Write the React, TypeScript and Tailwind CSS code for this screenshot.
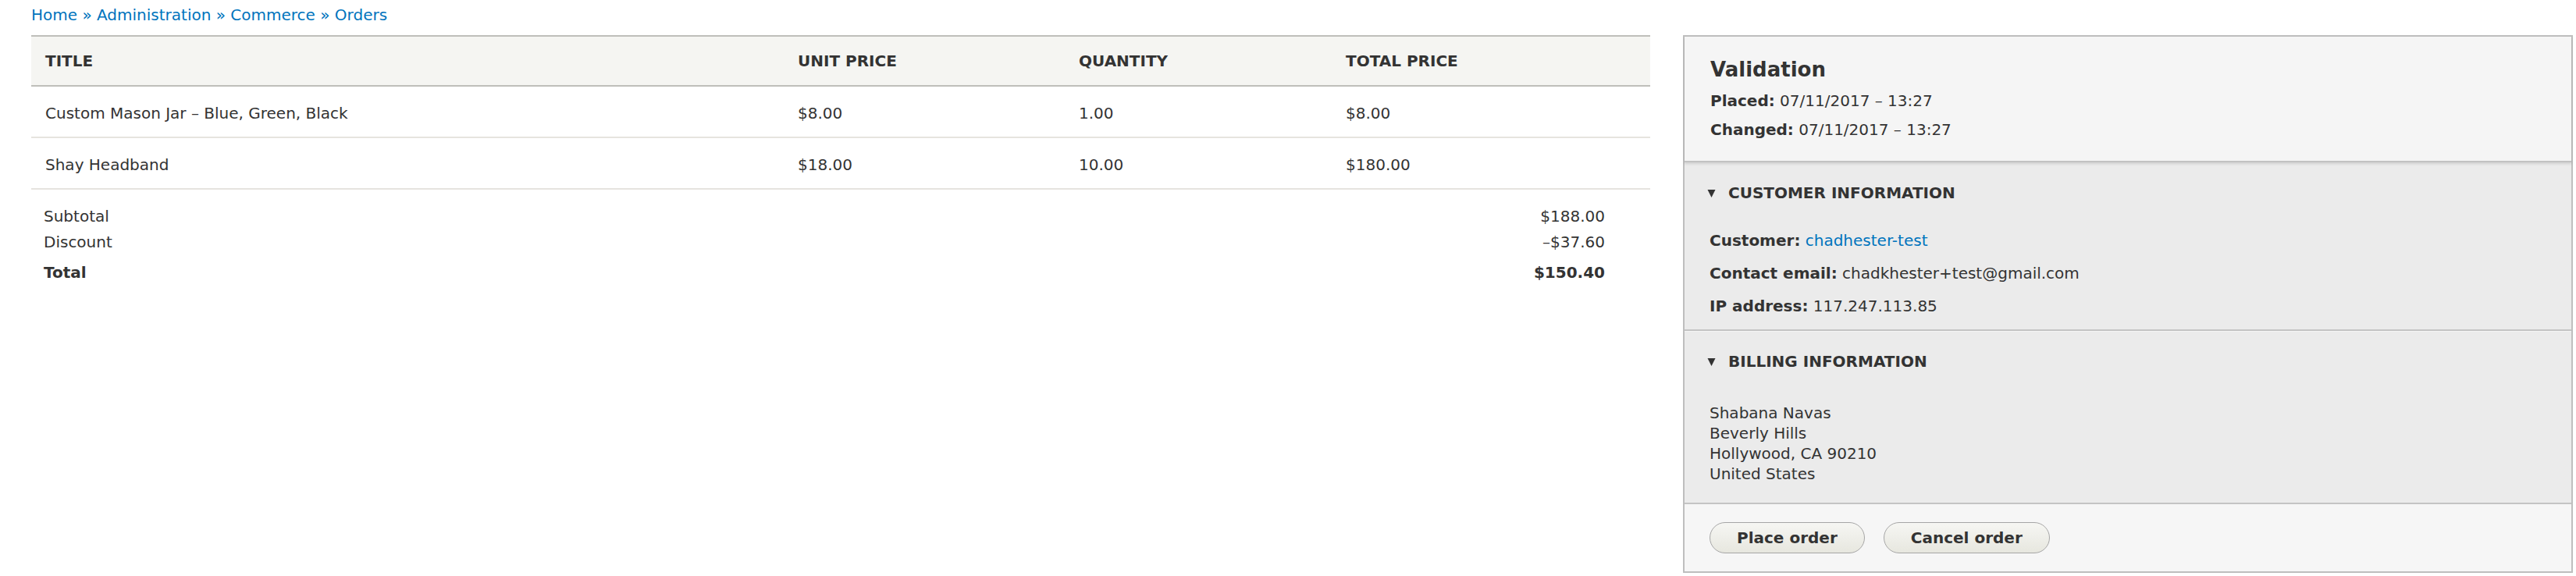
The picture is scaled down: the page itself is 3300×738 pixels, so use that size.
import React from 'react';

const ITEMS = [
  { title: 'Custom Mason Jar – Blue, Green, Black', unit: '$8.00', qty: '1.00', total: '$8.00' },
  { title: 'Shay Headband', unit: '$18.00', qty: '10.00', total: '$180.00' },
];

function Caret() {
  return (
    <svg width="11" height="11" viewBox="0 0 11 11" className="shrink-0">
      <polygon points="0.5,1 10.5,1 5.5,11" fill="#333333" />
    </svg>
  );
}

function Summary({ label }: { label: string }) {
  return (
    <div className="flex items-center pl-[29px] text-[20px] font-bold uppercase text-[#333]">
      <Caret />
      <span className="ml-[16px]">{label}</span>
    </div>
  );
}

export default function App() {
  return (
    <div className="w-[3300px] h-[738px] bg-white text-[#333] text-[20px] font-['DejaVu_Sans',sans-serif] pl-[40px] pr-[4px]">
      {/* Breadcrumb */}
      <div className="h-[45px] pt-[5px] leading-[29px] text-[#0074bd]">
        <a>Home</a> » <a>Administration</a> » <a>Commerce</a> » <a>Orders</a>
      </div>

      <div className="flex gap-[42px] items-start">
        {/* Order items table */}
        <div className="flex-1">
          <div className="grid grid-cols-[964px_360px_342px_1fr] h-[66px] items-center bg-[#f5f5f2] border-y-2 border-[#bfbfba] font-bold uppercase">
            <div className="pl-[18px]">Title</div>
            <div className="pl-[18px]">Unit price</div>
            <div className="pl-[18px]">Quantity</div>
            <div className="pl-[18px]">Total price</div>
          </div>
          {ITEMS.map((item) => (
            <div
              key={item.title}
              className="grid grid-cols-[964px_360px_342px_1fr] h-[66px] items-center pt-[3px] border-b-2 border-[#e6e4df]"
            >
              <div className="pl-[18px]">{item.title}</div>
              <div className="pl-[18px]">{item.unit}</div>
              <div className="pl-[18px]">{item.qty}</div>
              <div className="pl-[18px]">{item.total}</div>
            </div>
          ))}

          {/* Totals */}
          <div className="pt-[18px] pl-[16px] pr-[58px]">
            <div className="flex justify-between leading-[33px]">
              <span>Subtotal</span>
              <span>$188.00</span>
            </div>
            <div className="flex justify-between leading-[33px]">
              <span>Discount</span>
              <span>–$37.60</span>
            </div>
            <div className="flex justify-between leading-[33px] mt-[6px] font-bold">
              <span>Total</span>
              <span>$150.40</span>
            </div>
          </div>
        </div>

        {/* Sidebar */}
        <div className="w-[1140px] h-[689px] border-2 border-[#bebebe] flex flex-col bg-[#ebebeb]">
          <div className="relative z-10 h-[161px] shrink-0 bg-[#f5f5f5] border-b-2 border-[#c2c2c2] shadow-[0_2px_3px_rgba(0,0,0,0.12)] pt-[27px] pl-[33px]">
            <h2 className="text-[26px] font-bold leading-[30px]">Validation</h2>
            <div className="mt-[7px] leading-[37px]">
              <span className="font-bold">Placed:</span> 07/11/2017 – 13:27
            </div>
            <div className="leading-[37px]">
              <span className="font-bold">Changed:</span> 07/11/2017 – 13:27
            </div>
          </div>

          <div className="h-[216px] shrink-0 border-b-2 border-[#c4c4c4] pt-[24px]">
            <Summary label="Customer information" />
            <div className="mt-[25px] pl-[32px] leading-[42px]">
              <div>
                <span className="font-bold">Customer:</span> <a className="text-[#0074bd]">chadhester-test</a>
              </div>
              <div>
                <span className="font-bold">Contact email:</span> chadkhester+test@gmail.com
              </div>
              <div>
                <span className="font-bold">IP address:</span> 117.247.113.85
              </div>
            </div>
          </div>

          <div className="h-[222px] shrink-0 border-t border-[#f4f4f4] border-b-2 border-b-[#c4c4c4] pt-[23px]">
            <Summary label="Billing information" />
            <div className="mt-[38px] pl-[32px] leading-[26px]">
              <div>Shabana Navas</div>
              <div>Beverly Hills</div>
              <div>Hollywood, CA 90210</div>
              <div>United States</div>
            </div>
          </div>

          <div className="flex-1 bg-[#f6f6f6] pt-[23px] pl-[32px] flex gap-[24px] items-start">
            <button className="h-[40px] px-[34px] rounded-full border border-[#a6a6a6] bg-gradient-to-b from-[#f6f6f3] to-[#e7e7df] font-bold text-[#333] leading-none">
              Place order
            </button>
            <button className="h-[40px] px-[34px] rounded-full border border-[#a6a6a6] bg-gradient-to-b from-[#f6f6f3] to-[#e7e7df] font-bold text-[#333] leading-none">
              Cancel order
            </button>
          </div>
        </div>
      </div>
    </div>
  );
}
